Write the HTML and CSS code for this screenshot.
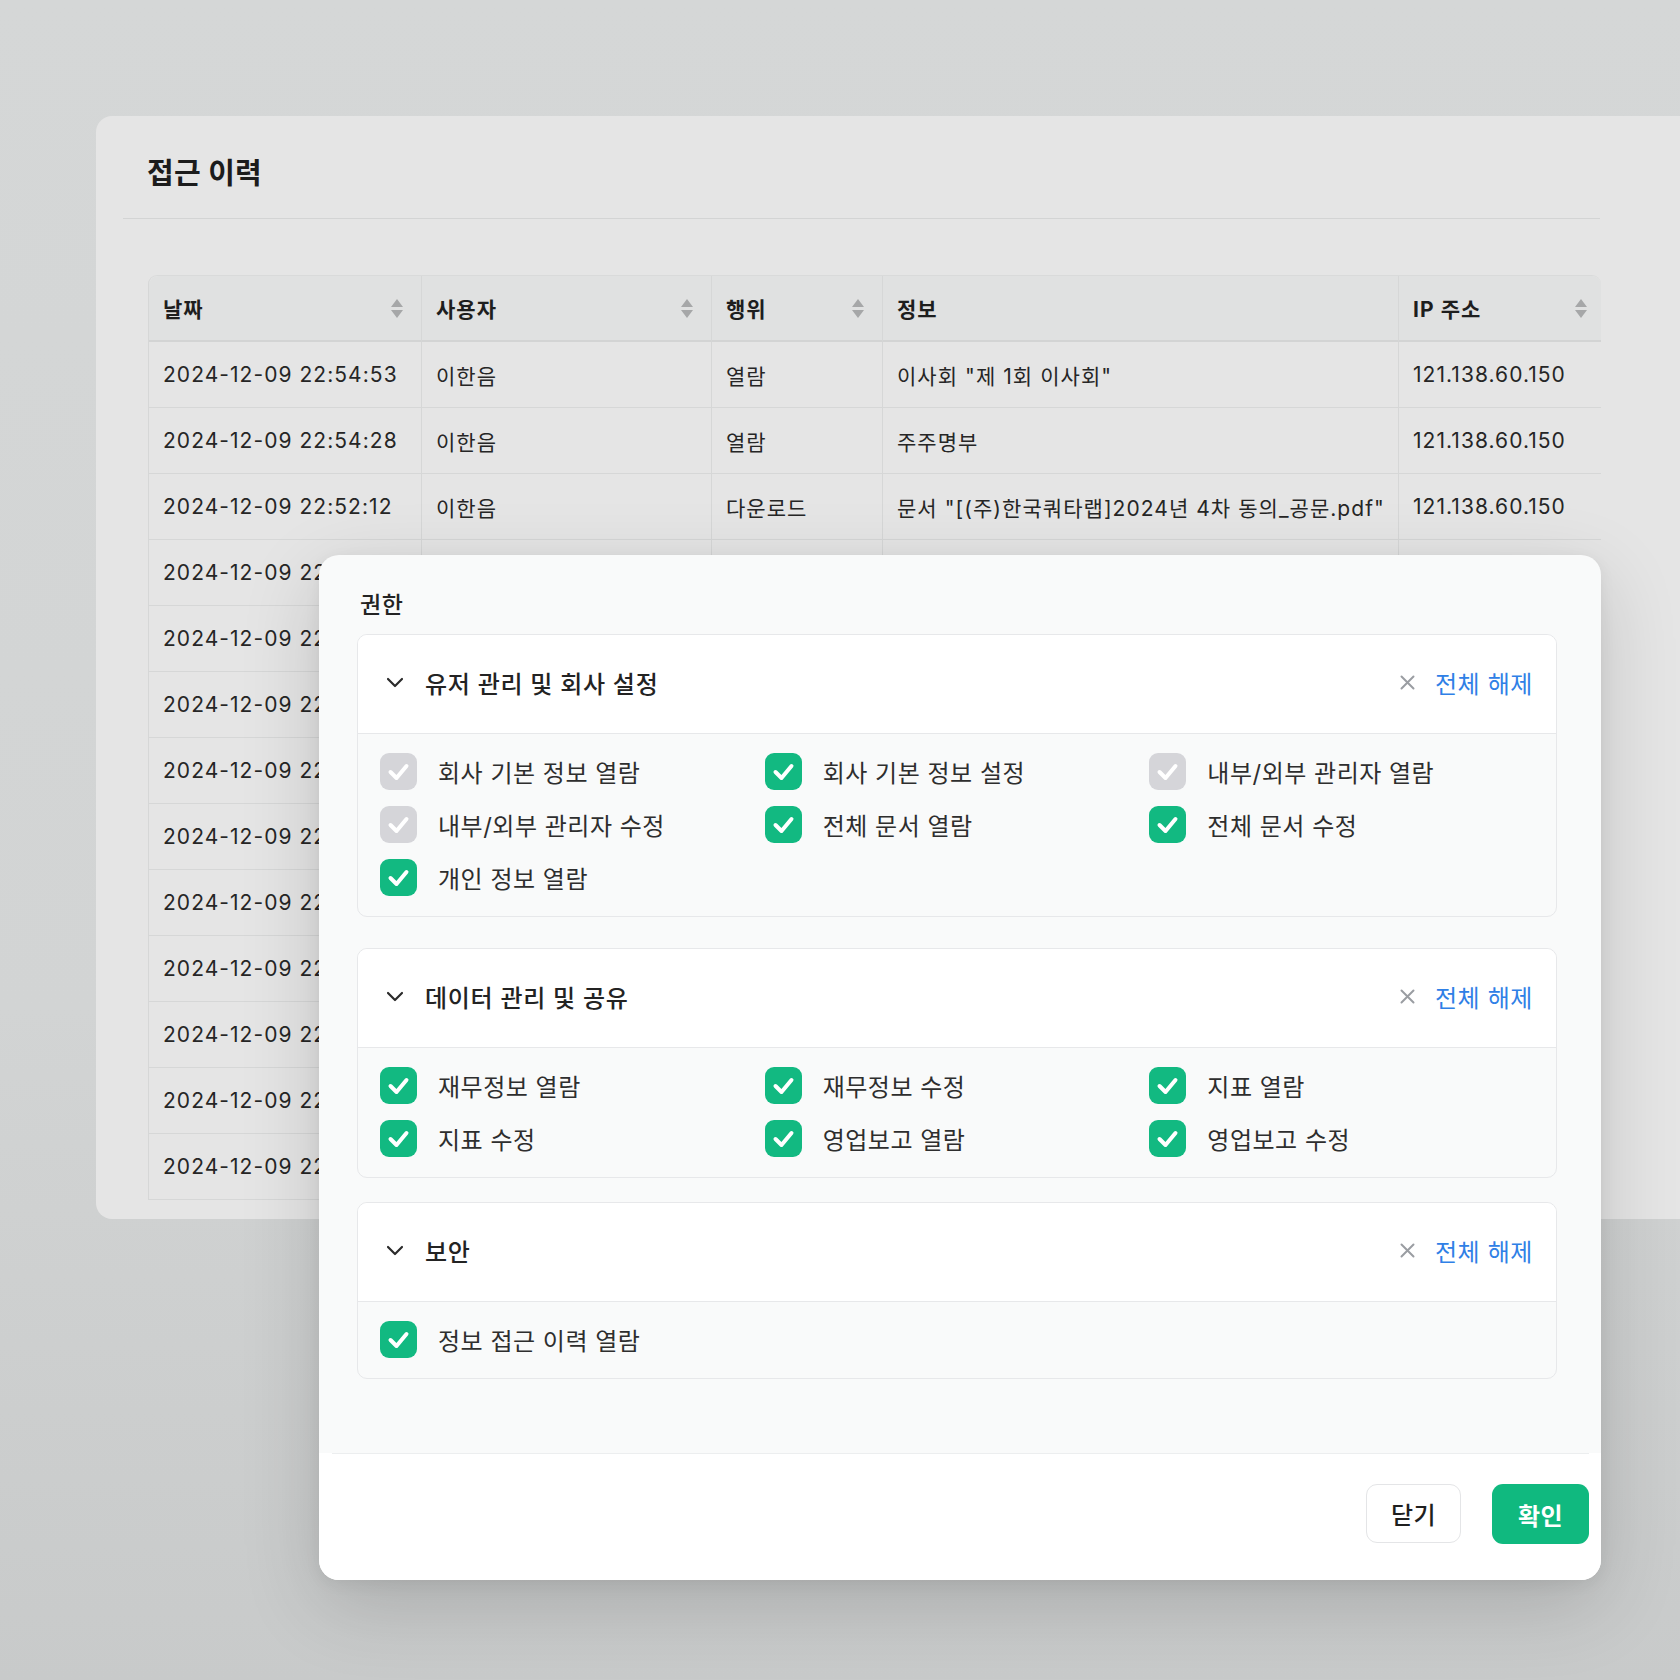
FILE: index.html
```html
<!DOCTYPE html>
<html lang="ko">
<head>
<meta charset="utf-8">
<title>접근 이력</title>
<link rel="stylesheet" href="styles.css">
</head>
<body>
<div class="page">
  <section class="card">
    <h1 class="card-title">접근 이력</h1>
    <div class="card-divider"></div>
    <table class="log-table">
      <colgroup>
        <col class="c-date"><col class="c-user"><col class="c-act"><col class="c-info"><col class="c-ip">
      </colgroup>
      <thead>
        <tr>
          <th><div class="th-in"><span>날짜</span><span class="sort"><i class="up"></i><i class="down"></i></span></div></th>
          <th><div class="th-in"><span>사용자</span><span class="sort"><i class="up"></i><i class="down"></i></span></div></th>
          <th><div class="th-in"><span>행위</span><span class="sort"><i class="up"></i><i class="down"></i></span></div></th>
          <th><div class="th-in"><span>정보</span></div></th>
          <th><div class="th-in"><span>IP 주소</span><span class="sort"><i class="up"></i><i class="down"></i></span></div></th>
        </tr>
      </thead>
      <tbody>
        <tr><td>2024-12-09 22:54:53</td><td>이한음</td><td>열람</td><td>이사회 "제 1회 이사회"</td><td>121.138.60.150</td></tr>
        <tr><td>2024-12-09 22:54:28</td><td>이한음</td><td>열람</td><td>주주명부</td><td>121.138.60.150</td></tr>
        <tr><td>2024-12-09 22:52:12</td><td>이한음</td><td>다운로드</td><td>문서 "[(주)한국쿼타랩]2024년 4차 동의_공문.pdf"</td><td>121.138.60.150</td></tr>
        <tr><td>2024-12-09 22:51:40</td><td>이한음</td><td>열람</td><td>주주명부</td><td>121.138.60.150</td></tr>
        <tr><td>2024-12-09 22:50:02</td><td>이한음</td><td>열람</td><td>이사회 "제 1회 이사회"</td><td>121.138.60.150</td></tr>
        <tr><td>2024-12-09 22:48:37</td><td>이한음</td><td>열람</td><td>재무정보</td><td>121.138.60.150</td></tr>
        <tr><td>2024-12-09 22:47:15</td><td>이한음</td><td>열람</td><td>지표</td><td>121.138.60.150</td></tr>
        <tr><td>2024-12-09 22:45:51</td><td>이한음</td><td>열람</td><td>영업보고</td><td>121.138.60.150</td></tr>
        <tr><td>2024-12-09 22:44:09</td><td>이한음</td><td>열람</td><td>주주명부</td><td>121.138.60.150</td></tr>
        <tr><td>2024-12-09 22:42:33</td><td>이한음</td><td>열람</td><td>회사 기본 정보</td><td>121.138.60.150</td></tr>
        <tr><td>2024-12-09 22:41:18</td><td>이한음</td><td>열람</td><td>전체 문서</td><td>121.138.60.150</td></tr>
        <tr><td>2024-12-09 22:40:02</td><td>이한음</td><td>열람</td><td>개인 정보</td><td>121.138.60.150</td></tr>
        <tr><td>2024-12-09 22:38:47</td><td>이한음</td><td>열람</td><td>주주명부</td><td>121.138.60.150</td></tr>
      </tbody>
    </table>
  </section>

  <div class="modal">
    <div class="modal-body">
      <div class="perm-label">권한</div>

      <div class="perm-section">
        <div class="perm-head">
          <div class="perm-head-left">
            <svg class="chev" width="18" height="11" viewBox="0 0 18 11"><path d="M2 2 L9 9 L16 2" fill="none" stroke="#2b2b2b" stroke-width="2.2" stroke-linecap="round" stroke-linejoin="round"/></svg>
            <span class="perm-title">유저 관리 및 회사 설정</span>
          </div>
          <div class="perm-clear">
            <svg width="15" height="15" viewBox="0 0 15 15"><path d="M1.5 1.5 L13.5 13.5 M13.5 1.5 L1.5 13.5" stroke="#9a9da2" stroke-width="2" stroke-linecap="round"/></svg>
            <span>전체 해제</span>
          </div>
        </div>
        <div class="perm-body">
          <div class="perm-item"><svg class="cb" viewBox="0 0 37 37"><rect width="37" height="37" rx="9" class="cb-off"/><path d="M10.5 19 L16.5 25 L26.5 13" class="cb-check"/></svg><span>회사 기본 정보 열람</span></div>
          <div class="perm-item"><svg class="cb" viewBox="0 0 37 37"><rect width="37" height="37" rx="9" class="cb-on"/><path d="M10.5 19 L16.5 25 L26.5 13" class="cb-check"/></svg><span>회사 기본 정보 설정</span></div>
          <div class="perm-item"><svg class="cb" viewBox="0 0 37 37"><rect width="37" height="37" rx="9" class="cb-off"/><path d="M10.5 19 L16.5 25 L26.5 13" class="cb-check"/></svg><span>내부/외부 관리자 열람</span></div>
          <div class="perm-item"><svg class="cb" viewBox="0 0 37 37"><rect width="37" height="37" rx="9" class="cb-off"/><path d="M10.5 19 L16.5 25 L26.5 13" class="cb-check"/></svg><span>내부/외부 관리자 수정</span></div>
          <div class="perm-item"><svg class="cb" viewBox="0 0 37 37"><rect width="37" height="37" rx="9" class="cb-on"/><path d="M10.5 19 L16.5 25 L26.5 13" class="cb-check"/></svg><span>전체 문서 열람</span></div>
          <div class="perm-item"><svg class="cb" viewBox="0 0 37 37"><rect width="37" height="37" rx="9" class="cb-on"/><path d="M10.5 19 L16.5 25 L26.5 13" class="cb-check"/></svg><span>전체 문서 수정</span></div>
          <div class="perm-item"><svg class="cb" viewBox="0 0 37 37"><rect width="37" height="37" rx="9" class="cb-on"/><path d="M10.5 19 L16.5 25 L26.5 13" class="cb-check"/></svg><span>개인 정보 열람</span></div>
        </div>
      </div>

      <div class="perm-section sec-2">
        <div class="perm-head">
          <div class="perm-head-left">
            <svg class="chev" width="18" height="11" viewBox="0 0 18 11"><path d="M2 2 L9 9 L16 2" fill="none" stroke="#2b2b2b" stroke-width="2.2" stroke-linecap="round" stroke-linejoin="round"/></svg>
            <span class="perm-title">데이터 관리 및 공유</span>
          </div>
          <div class="perm-clear">
            <svg width="15" height="15" viewBox="0 0 15 15"><path d="M1.5 1.5 L13.5 13.5 M13.5 1.5 L1.5 13.5" stroke="#9a9da2" stroke-width="2" stroke-linecap="round"/></svg>
            <span>전체 해제</span>
          </div>
        </div>
        <div class="perm-body">
          <div class="perm-item"><svg class="cb" viewBox="0 0 37 37"><rect width="37" height="37" rx="9" class="cb-on"/><path d="M10.5 19 L16.5 25 L26.5 13" class="cb-check"/></svg><span>재무정보 열람</span></div>
          <div class="perm-item"><svg class="cb" viewBox="0 0 37 37"><rect width="37" height="37" rx="9" class="cb-on"/><path d="M10.5 19 L16.5 25 L26.5 13" class="cb-check"/></svg><span>재무정보 수정</span></div>
          <div class="perm-item"><svg class="cb" viewBox="0 0 37 37"><rect width="37" height="37" rx="9" class="cb-on"/><path d="M10.5 19 L16.5 25 L26.5 13" class="cb-check"/></svg><span>지표 열람</span></div>
          <div class="perm-item"><svg class="cb" viewBox="0 0 37 37"><rect width="37" height="37" rx="9" class="cb-on"/><path d="M10.5 19 L16.5 25 L26.5 13" class="cb-check"/></svg><span>지표 수정</span></div>
          <div class="perm-item"><svg class="cb" viewBox="0 0 37 37"><rect width="37" height="37" rx="9" class="cb-on"/><path d="M10.5 19 L16.5 25 L26.5 13" class="cb-check"/></svg><span>영업보고 열람</span></div>
          <div class="perm-item"><svg class="cb" viewBox="0 0 37 37"><rect width="37" height="37" rx="9" class="cb-on"/><path d="M10.5 19 L16.5 25 L26.5 13" class="cb-check"/></svg><span>영업보고 수정</span></div>
        </div>
      </div>

      <div class="perm-section sec-3">
        <div class="perm-head">
          <div class="perm-head-left">
            <svg class="chev" width="18" height="11" viewBox="0 0 18 11"><path d="M2 2 L9 9 L16 2" fill="none" stroke="#2b2b2b" stroke-width="2.2" stroke-linecap="round" stroke-linejoin="round"/></svg>
            <span class="perm-title">보안</span>
          </div>
          <div class="perm-clear">
            <svg width="15" height="15" viewBox="0 0 15 15"><path d="M1.5 1.5 L13.5 13.5 M13.5 1.5 L1.5 13.5" stroke="#9a9da2" stroke-width="2" stroke-linecap="round"/></svg>
            <span>전체 해제</span>
          </div>
        </div>
        <div class="perm-body">
          <div class="perm-item"><svg class="cb" viewBox="0 0 37 37"><rect width="37" height="37" rx="9" class="cb-on"/><path d="M10.5 19 L16.5 25 L26.5 13" class="cb-check"/></svg><span>정보 접근 이력 열람</span></div>
        </div>
      </div>
    </div>
    <div class="modal-footer">
      <button class="btn btn-close">닫기</button>
      <button class="btn btn-ok">확인</button>
    </div>
  </div>
</div>
</body>
</html>
```

FILE: styles.css
```css
* { box-sizing: border-box; }

html, body {
  margin: 0;
  padding: 0;
}

body {
  width: 1680px;
  height: 1680px;
  overflow: hidden;
  background: linear-gradient(180deg, #d5d7d7 0%, #d2d4d4 60%, #c8caca 100%);
  font-family: "Inter", "Noto Sans CJK KR", sans-serif;
  color: #222;
}

.page {
  position: relative;
  width: 1680px;
  height: 1680px;
  padding: 116px 0 0 96px;
}

/* ---------- background card ---------- */
.card {
  width: 1660px;
  height: 1103px;
  background: #e5e5e5;
  border-radius: 16px;
  padding: 0 0 19px 0;
}

.card-title {
  margin: 0;
  padding: 40px 0 26px 51px;
  font-size: 29px;
  line-height: 36px;
  font-weight: 700;
  color: #1c1c1c;
  letter-spacing: 0.3px;
}

.card-divider {
  margin-left: 27px;
  width: 1477px;
  height: 1px;
  background: #d3d4d4;
}

.log-table {
  margin: 56px 0 0 52px;
  width: 1452px;
  table-layout: fixed;
  border-collapse: separate;
  border-spacing: 0;
  font-size: 21px;
  letter-spacing: 1.05px;
  color: #262626;
  border-left: 1px solid #d6d7d7;
  border-top: 1px solid #d9dada;
  border-top-left-radius: 9px;
  border-top-right-radius: 9px;
}

.c-date { width: 273px; }
.c-user { width: 290px; }
.c-act { width: 171px; }
.c-info { width: 516px; }
.c-ip { width: 202px; }

.log-table th {
  height: 66px;
  background: #e0e1e1;
  font-weight: 700;
  text-align: left;
  padding: 0 18px 0 14px;
  border-bottom: 2px solid #d3d4d4;
  border-right: 1px solid #d6d7d7;
  color: #1e1e1e;
}

.log-table th:first-child { border-top-left-radius: 9px; }
.log-table th:last-child { border-top-right-radius: 9px; border-right: none; padding-right: 14px; }

.th-in {
  display: flex;
  align-items: center;
  justify-content: space-between;
}

.sort {
  display: flex;
  flex-direction: column;
  gap: 3px;
  align-items: center;
}

.sort i {
  display: block;
  width: 0;
  height: 0;
  border-left: 6px solid transparent;
  border-right: 6px solid transparent;
}

.sort .up { border-bottom: 8px solid #a6a7a8; }
.sort .down { border-top: 8px solid #a6a7a8; }

.log-table td {
  height: 66px;
  padding: 0 14px;
  white-space: nowrap;
  overflow: hidden;
  border-bottom: 1px solid #d6d7d7;
  border-right: 1px solid #d6d7d7;
}

.log-table td:last-child { border-right: none; }

/* ---------- modal ---------- */
.modal {
  position: absolute;
  left: 319px;
  top: 555px;
  width: 1282px;
  height: 1025px;
  background: #f9fafa;
  border-radius: 20px;
  overflow: hidden;
  box-shadow: 0 24px 80px rgba(0, 0, 0, 0.16), 0 4px 16px rgba(0, 0, 0, 0.06);
  display: flex;
  flex-direction: column;
}

.modal-body {
  height: 898px;
  padding: 35px 44px 0 38px;
}

.perm-label {
  font-size: 23px;
  line-height: 30px;
  font-weight: 500;
  color: #232323;
  letter-spacing: 0.5px;
  margin: 0 0 14px 3px;
}

.perm-section {
  border: 1px solid #e7e8ea;
  border-radius: 10px;
  background: #f9fafa;
  overflow: hidden;
}

.sec-2 { margin-top: 31px; }
.sec-3 { margin-top: 24px; }

.perm-head {
  height: 99px;
  background: #ffffff;
  border-bottom: 1px solid #e7e8ea;
  display: flex;
  align-items: center;
  justify-content: space-between;
  padding: 0 23px 4px 28px;
}

.perm-head-left {
  display: flex;
  align-items: center;
  gap: 21px;
}

.chev { display: block; }

.perm-title {
  font-size: 24px;
  font-weight: 500;
  color: #232323;
  letter-spacing: 0.7px;
}

.perm-clear {
  display: flex;
  align-items: center;
  gap: 20px;
  font-size: 24px;
  letter-spacing: 0.6px;
  color: #2f80e6;
}

.perm-clear svg { display: block; }

.perm-body {
  display: grid;
  grid-template-columns: repeat(3, 1fr);
  row-gap: 16px;
  padding: 19px 22px 20px;
}

.perm-item {
  display: flex;
  align-items: center;
  gap: 21px;
  height: 37px;
  font-size: 24px;
  letter-spacing: 0.5px;
  color: #2e2e2e;
}

.cb {
  width: 37px;
  height: 37px;
  flex: none;
  display: block;
}

.cb-on { fill: #12b981; }
.cb-off { fill: #d5d5d9; }

.cb-check {
  fill: none;
  stroke: #ffffff;
  stroke-width: 4;
  stroke-linecap: round;
  stroke-linejoin: round;
}

.modal-footer {
  position: relative;
  flex: 1;
  background: #ffffff;
  display: flex;
  justify-content: flex-end;
  align-items: flex-start;
  gap: 31px;
  padding: 31px 12px 0 0;
}

.modal-footer::before {
  content: "";
  position: absolute;
  top: 0;
  left: 13px;
  right: 12px;
  height: 1px;
  background: #eceeef;
}

.btn {
  font-family: "Inter", "Noto Sans CJK KR", sans-serif;
  font-size: 24px;
  border-radius: 11px;
  height: 59px;
  cursor: pointer;
  letter-spacing: 0.5px;
}

.btn-close {
  width: 95px;
  background: #ffffff;
  border: 1px solid #e4e5e7;
  color: #1f1f1f;
  font-weight: 500;
}

.btn-ok {
  width: 97px;
  height: 60px;
  background: #10b97f;
  border: none;
  color: #ffffff;
  font-weight: 600;
}
```
